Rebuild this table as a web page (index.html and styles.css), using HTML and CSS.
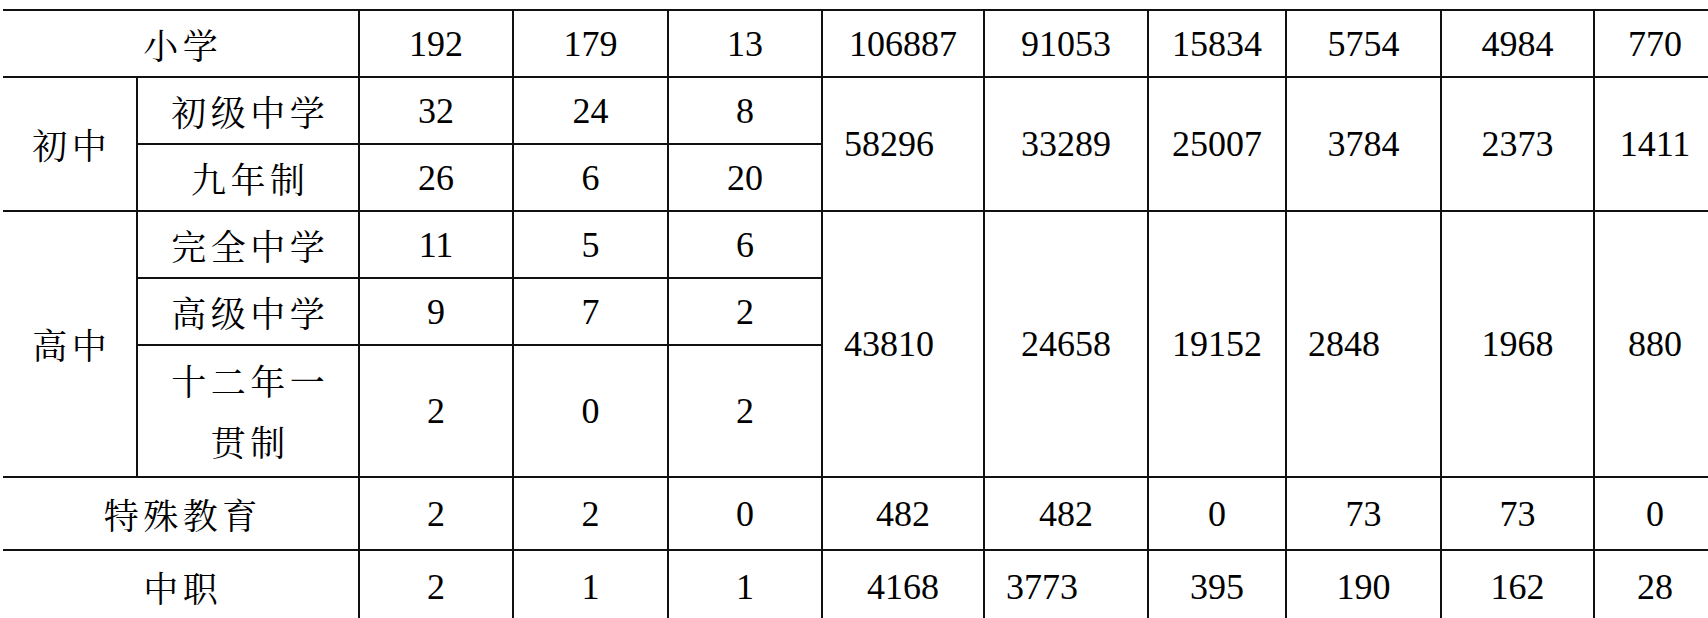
FILE: index.html
```html
<!DOCTYPE html>
<html>
<head>
<meta charset="utf-8">
<title>学校统计表</title>
<link rel="stylesheet" href="styles.css">
</head>
<body>
<div class="sheet">
  <div class="cell zh span-c2">小学</div>
  <div class="cell num">192</div>
  <div class="cell num">179</div>
  <div class="cell num">13</div>
  <div class="cell num">106887</div>
  <div class="cell num">91053</div>
  <div class="cell num">15834</div>
  <div class="cell num">5754</div>
  <div class="cell num">4984</div>
  <div class="cell num">770</div>

  <div class="cell zh span-r2">初中</div>
  <div class="cell zh">初级中学</div>
  <div class="cell num">32</div>
  <div class="cell num">24</div>
  <div class="cell num">8</div>
  <div class="cell num span-r2 left">58296</div>
  <div class="cell num span-r2">33289</div>
  <div class="cell num span-r2">25007</div>
  <div class="cell num span-r2">3784</div>
  <div class="cell num span-r2">2373</div>
  <div class="cell num span-r2">1411</div>

  <div class="cell zh">九年制</div>
  <div class="cell num">26</div>
  <div class="cell num">6</div>
  <div class="cell num">20</div>

  <div class="cell zh span-r3">高中</div>
  <div class="cell zh">完全中学</div>
  <div class="cell num">11</div>
  <div class="cell num">5</div>
  <div class="cell num">6</div>
  <div class="cell num span-r3 left">43810</div>
  <div class="cell num span-r3">24658</div>
  <div class="cell num span-r3">19152</div>
  <div class="cell num span-r3 left">2848</div>
  <div class="cell num span-r3">1968</div>
  <div class="cell num span-r3">880</div>

  <div class="cell zh">高级中学</div>
  <div class="cell num">9</div>
  <div class="cell num">7</div>
  <div class="cell num">2</div>

  <div class="cell zh wrap">十二年一<br>贯制</div>
  <div class="cell num">2</div>
  <div class="cell num">0</div>
  <div class="cell num">2</div>

  <div class="cell zh span-c2">特殊教育</div>
  <div class="cell num">2</div>
  <div class="cell num">2</div>
  <div class="cell num">0</div>
  <div class="cell num">482</div>
  <div class="cell num">482</div>
  <div class="cell num">0</div>
  <div class="cell num">73</div>
  <div class="cell num">73</div>
  <div class="cell num">0</div>

  <div class="cell zh span-c2">中职</div>
  <div class="cell num">2</div>
  <div class="cell num">1</div>
  <div class="cell num">1</div>
  <div class="cell num">4168</div>
  <div class="cell num left">3773</div>
  <div class="cell num">395</div>
  <div class="cell num">190</div>
  <div class="cell num">162</div>
  <div class="cell num">28</div>
</div>
</body>
</html>
```

FILE: styles.css
```css
body {
  margin: 0;
  background: #ffffff;
  color: #000000;
}

.sheet {
  display: grid;
  grid-template-columns: 133px 220px 152px 153px 152px 160px 162px 136px 153px 151px 120px;
  grid-template-rows: 65px 65px 65px 65px 65px 130px 71px 71px;
  gap: 2px;
  margin: 9px 0 0 3px;
  padding-top: 2px;
  width: 1705px;
  height: 609px;
  overflow: hidden;
  background: #111111;
}

.cell {
  background: #ffffff;
  display: flex;
  align-items: center;
  justify-content: center;
  text-align: center;
}

.num {
  font-family: "Liberation Serif", serif;
  font-size: 36px;
  line-height: 40px;
}

.zh {
  font-family: "Noto Serif CJK SC", serif;
  font-size: 35px;
  line-height: 40px;
  letter-spacing: 4.5px;
  padding-left: 4.5px;
}

.span-c2 { grid-column: span 2; }
.span-r2 { grid-row: span 2; }
.span-r3 { grid-row: span 3; }

.wrap {
  line-height: 61px;
}

.left {
  justify-content: flex-start;
  padding-left: 21px;
}
```
